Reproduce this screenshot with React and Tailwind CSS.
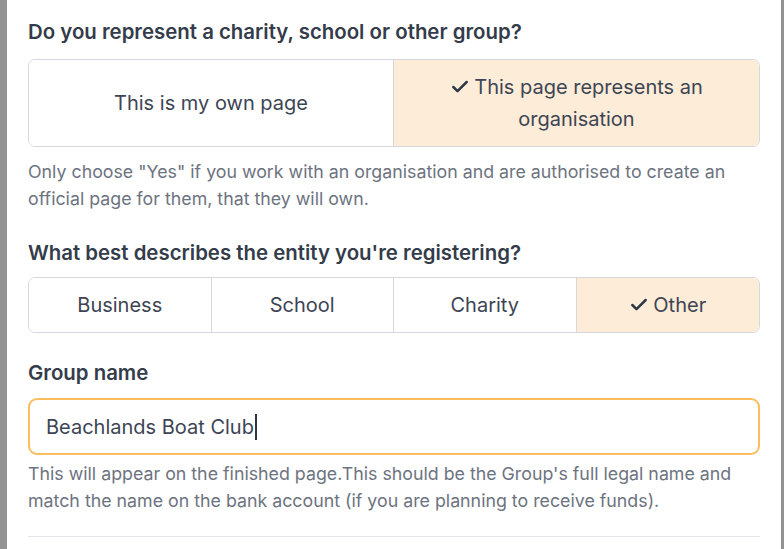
import { Check } from "lucide-react"

const Segment = ({ label, selected, className = "" }) => (
  <div
    className={`flex items-center justify-center px-4 py-[11px] text-center text-[20px] leading-[32px] text-[#3d4554] ${
      selected ? "bg-[#fdecd7]" : "bg-white"
    } ${className}`}
  >
    <span>
      {selected && <Check size={20} strokeWidth={3} className="inline-block align-[-3px] mr-1 text-[#2f3744]" />}
      {label}
    </span>
  </div>
)

const Heading = ({ children, className = "" }) => (
  <h2 className={`text-[20.4px] font-semibold leading-[28px] text-[#343c4a] ${className}`}>{children}</h2>
)

const Help = ({ children, className = "" }) => (
  <p className={`text-[17.8px] leading-[27px] text-[#6d7380] ${className}`}>{children}</p>
)

export default function App() {
  const entities = ["Business", "School", "Charity", "Other"]
  return (
    <div className="flex h-[549px] w-[784px] overflow-hidden font-['Inter',sans-serif]">
      <div className="w-[7px] bg-[#939393]" />
      <div className="flex-1 bg-white px-[21px] pt-[18px]">
        <Heading>Do you represent a charity, school or other group?</Heading>
        <div className="mt-[13px] grid grid-cols-2 overflow-hidden rounded-[7px] border border-[#d6d8de]">
          <Segment label="This is my own page" className="border-r border-[#d6d8de]" />
          <Segment label="This page represents an organisation" selected />
        </div>
        <Help className="mt-[11px] pr-[30px]">
          Only choose "Yes" if you work with an organisation and are authorised to create an official page for them, that they will own.
        </Help>
        <Heading className="mt-[27px]">What best describes the entity you're registering?</Heading>
        <div className="mt-[10px] grid grid-cols-4 overflow-hidden rounded-[7px] border border-[#d6d8de]">
          {entities.map((e, i) => (
            <Segment
              key={e}
              label={e}
              selected={e === "Other"}
              className={i < entities.length - 1 ? "border-r border-[#d6d8de]" : ""}
            />
          ))}
        </div>
        <Heading className="mt-[26px]">Group name</Heading>
        <div className="mt-[11px] flex h-[57px] items-center rounded-[9px] border-2 border-[#fbbd5e] px-[16px]">
          <span className="text-[20px] text-[#3d4554]">Beachlands Boat Club</span>
          <span className="ml-[1px] h-[26px] w-[2px] bg-[#2f3744]" />
        </div>
        <Help className="mt-[5px] pr-[20px]">
          This will appear on the finished page.This should be the Group's full legal name and match the name on the bank account (if you are planning to receive funds).
        </Help>
        <div className="mt-[22px] border-t border-[#e3e5e8]" />
      </div>
      <div className="w-[3px] bg-[#939393]" />
    </div>
  )
}
